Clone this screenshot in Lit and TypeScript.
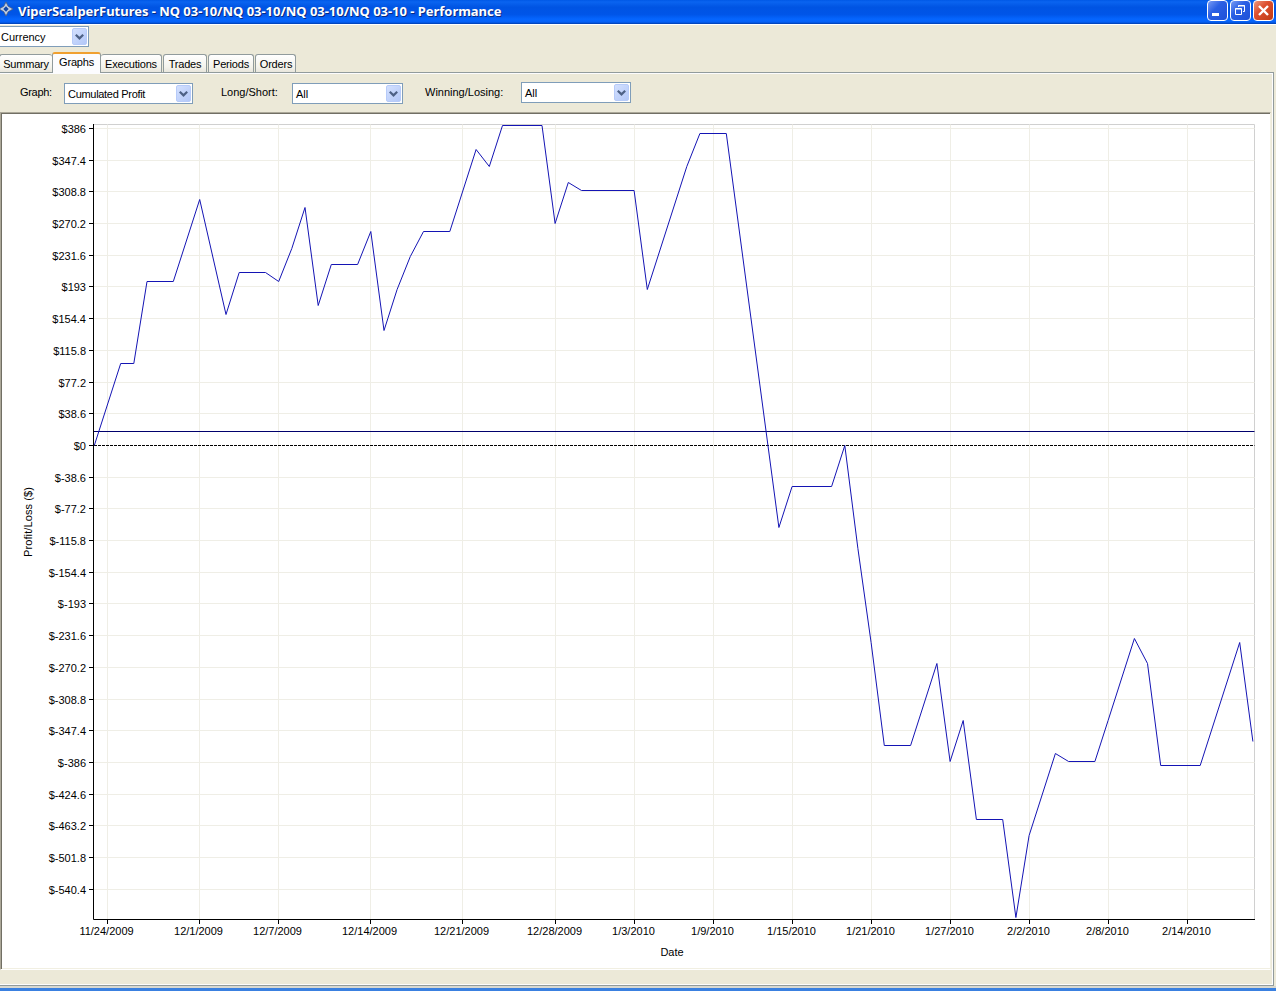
import { LitElement, html, svg, css } from "lit";
import { customElement, property } from "lit/decorators.js";

// [days since the first trade, cumulated profit in dollars]
const PROFIT: [number, number][] = [
  [0, 0], [2, 100], [3, 100], [4, 200], [6, 200], [8, 300], [10, 160], [11, 210],
  [13, 210], [14, 200], [15, 240], [16, 290], [17, 170], [18, 220], [20, 220],
  [21, 260], [22, 140], [23, 190], [24, 230], [25, 260], [27, 260], [29, 360],
  [30, 340], [31, 390], [34, 390], [35, 270], [36, 320], [37, 310], [41, 310],
  [42, 190], [45, 340], [46, 380], [48, 380], [52, -100], [53, -50], [56, -50],
  [57, 0], [58, -125], [59, -240], [60, -365], [62, -365], [64, -265], [65, -385],
  [66, -335], [67, -455], [69, -455], [70, -575], [71, -475], [73, -375],
  [74, -385], [76, -385], [77, -335], [79, -235], [80, -265], [81, -390],
  [84, -390], [87, -240], [88, -360],
];

const DATES: [number, string][] = [
  [1, "11/24/2009"], [8, "12/1/2009"], [14, "12/7/2009"], [21, "12/14/2009"],
  [28, "12/21/2009"], [35, "12/28/2009"], [41, "1/3/2010"], [47, "1/9/2010"],
  [53, "1/15/2010"], [59, "1/21/2010"], [65, "1/27/2010"], [71, "2/2/2010"],
  [77, "2/8/2010"], [83, "2/14/2010"],
];

const STEP = 38.6;
const AVERAGE = 17;

const LEFT = 91.5;
const RIGHT = 1252.5;
const TOP = 10.5;
const BOTTOM = 805.5;

const px = (day: number) => 92.35 + day * 13.165;
const py = (value: number) => 331.45 - value * 0.8215;
const snap = (n: number) => Math.floor(n) + 0.5;

@customElement("profit-chart")
export class ProfitChart extends LitElement {
  private renderValue(n: number) {
    const value = n * STEP;
    const y = snap(py(value));
    const label = `$${Number(value.toFixed(1))}`;
    return svg`
      <line class="grid" x1=${LEFT} x2=${RIGHT} y1=${y} y2=${y}></line>
      <line class="axis" x1=${LEFT - 4.5} x2=${LEFT} y1=${y} y2=${y}></line>
      <text x="84" y=${y + 4.5} text-anchor="end">${label}</text>
    `;
  }

  private renderDate([day, label]: [number, string]) {
    const x = snap(px(day));
    return svg`
      <line class="grid" x1=${x} x2=${x} y1=${TOP} y2=${BOTTOM}></line>
      <line class="axis" x1=${x} x2=${x} y1=${BOTTOM} y2=${BOTTOM + 4.5}></line>
      <text x=${x - 1} y="821" text-anchor="middle">${label}</text>
    `;
  }

  override render() {
    const ticks = Array.from({ length: 25 }, (_, i) => 10 - i);
    const points = PROFIT.map(([d, v]) => `${px(d).toFixed(1)},${snap(py(v))}`).join(" ");
    const avg = snap(py(AVERAGE));
    const zero = snap(py(0));
    return html`
      <svg width="1267" height="853" viewBox="0 0 1267 853">
        <path class="frame" d="M${LEFT} ${TOP}H${RIGHT}V${BOTTOM}"></path>
        ${DATES.map((d) => this.renderDate(d))} ${ticks.map((n) => this.renderValue(n))}
        <line class="gap" x1=${LEFT} x2=${RIGHT} y1=${zero} y2=${zero}></line>
        <line class="zero" x1=${LEFT + 0.5} x2=${RIGHT} y1=${zero} y2=${zero}></line>
        <line class="avg" x1=${LEFT} x2=${RIGHT} y1=${avg} y2=${avg}></line>
        <polyline class="profit" points=${points}></polyline>
        <path class="axis" d="M${LEFT} ${TOP - 0.5}V${BOTTOM}H${RIGHT + 0.5}"></path>
        <text x="670" y="842" text-anchor="middle">Date</text>
        <text transform="translate(30 408) rotate(-90)" text-anchor="middle" textLength="70">
          Profit/Loss ($)
        </text>
      </svg>
    `;
  }

  static override styles = css`
    :host {
      display: block;
    }
    svg {
      display: block;
    }
    text {
      font: 11px "Liberation Sans", Arial, sans-serif;
      fill: #000;
    }
    line,
    path,
    polyline {
      fill: none;
      stroke-width: 1;
    }
    .grid {
      stroke: #efeee6;
    }
    .frame {
      stroke: #d0d0d0;
    }
    .axis {
      stroke: #000;
    }
    .gap {
      stroke: #fff;
    }
    .zero {
      stroke: #000;
      stroke-dasharray: 3 1;
    }
    .avg {
      stroke: #00006c;
    }
    .profit {
      stroke: #1414b4;
    }
  `;
}

@customElement("xp-select")
export class XpSelect extends LitElement {
  @property() value = "";

  override render() {
    return html`
      <span class="value">${this.value}</span>
      <span class="button">
        <svg width="9" height="6" viewBox="0 0 9 6">
          <path d="M0.8 0.8L4.5 4.4L8.2 0.8"></path>
        </svg>
      </span>
    `;
  }

  static override styles = css`
    :host {
      display: flex;
      box-sizing: border-box;
      height: 21px;
      padding: 1px;
      border: 1px solid #7f9db9;
      background: #fff;
    }
    .value {
      flex: 1;
      padding-left: 2px;
      line-height: 18px;
      white-space: nowrap;
    }
    .button {
      display: flex;
      align-items: center;
      justify-content: center;
      box-sizing: border-box;
      width: 15px;
      height: 17px;
      border: 1px solid #b7cbf9;
      border-radius: 2px;
      background: linear-gradient(135deg, #d3e0fe, #b3c8f8);
    }
    path {
      fill: none;
      stroke: #4d6185;
      stroke-width: 2.2;
    }
  `;
}

@customElement("app-root")
export class AppRoot extends LitElement {
  private renderTitleBar() {
    return html`
      <header>
        <svg class="logo" width="14" height="18" viewBox="0 0 14 18">
          <path
            class="star"
            d="M6 2L8.2 6.3L13 9L8.2 11.7L6 16L3.8 11.7L-1 9L3.8 6.3Z"
          ></path>
          <path class="hole" d="M6 6.3L8.7 9L6 11.7L3.3 9Z"></path>
        </svg>
        <h1>ViperScalperFutures - NQ 03-10/NQ 03-10/NQ 03-10/NQ 03-10 - Performance</h1>
        <div class="buttons">
          <svg class="btn" viewBox="0 0 19 19">
            <rect class="glyph" x="4" y="12" width="7" height="3"></rect>
          </svg>
          <svg class="btn" viewBox="0 0 19 19">
            <path class="line" d="M7.5 6V4.5H13.5V10.5H12M7 5H14"></path>
            <path class="line" d="M4.5 7.5H10.5V13.5H4.5ZM4 8H11"></path>
          </svg>
          <svg class="btn close" viewBox="0 0 19 19">
            <path class="cross" d="M5 5L14 14M14 5L5 14"></path>
          </svg>
        </div>
      </header>
    `;
  }

  override render() {
    return html`
      ${this.renderTitleBar()}
      <div class="currency"><xp-select class="w-currency" value="Currency"></xp-select></div>
      <nav>
        <span class="tab summary">Summary</span>
        <span class="tab graphs active">Graphs</span>
        <span class="tab executions">Executions</span>
        <span class="tab trades">Trades</span>
        <span class="tab periods">Periods</span>
        <span class="tab orders">Orders</span>
      </nav>
      <main>
        <div class="filters">
          <label class="l-graph">Graph:</label>
          <xp-select class="w-graph" value="Cumulated Profit"></xp-select>
          <label class="l-side">Long/Short:</label>
          <xp-select class="w-side" value="All"></xp-select>
          <label class="l-result">Winning/Losing:</label>
          <xp-select class="w-result" value="All"></xp-select>
        </div>
        <div class="panel"><profit-chart></profit-chart></div>
      </main>
      <footer></footer>
    `;
  }

  static override styles = css`
    :host {
      display: flex;
      flex-direction: column;
      box-sizing: border-box;
      width: 1276px;
      height: 991px;
      overflow: hidden;
      background: #ece9d8;
      color: #000;
      font: 11px "Liberation Sans", Arial, sans-serif;
    }
    header {
      display: flex;
      flex: none;
      box-sizing: border-box;
      height: 25px;
      border-bottom: 1px solid #fff;
      background: linear-gradient(
        #0058e6 0,
        #0a64f0 8%,
        #0054e3 30%,
        #0055e8 60%,
        #0566ff 80%,
        #0560f5 92%,
        #003dac 100%
      );
    }
    .star {
      fill: #c4d0e4;
      stroke: #4a5c80;
      stroke-width: 0.8;
    }
    .hole {
      fill: #1248a8;
    }
    h1 {
      flex: 1;
      margin: 0 0 0 4px;
      color: #fff;
      font: bold 13px/22px "Noto Sans", "Open Sans", sans-serif;
      letter-spacing: -0.03px;
      text-shadow: 1px 1px 0 #0a2a80;
      white-space: nowrap;
    }
    .buttons {
      display: flex;
      gap: 2px;
      padding-right: 2px;
    }
    .btn {
      box-sizing: border-box;
      width: 21px;
      height: 21px;
      border: 1px solid #fff;
      border-radius: 4px;
      background: linear-gradient(135deg, #7a9cf4, #2b60e4 40%, #1d50d8);
    }
    .close {
      background: linear-gradient(135deg, #ee9a80, #dd5030 40%, #c03a14);
    }
    .glyph {
      fill: #fff;
    }
    .line {
      fill: none;
      stroke: #fff;
    }
    .cross {
      stroke: #fff;
      stroke-width: 2.4;
    }
    .currency {
      flex: none;
      box-sizing: border-box;
      height: 27px;
      padding-top: 1px;
    }
    .w-currency {
      width: 92px;
      margin-left: -3px;
    }
    nav {
      display: flex;
      flex: none;
      align-items: flex-end;
      height: 20px;
      letter-spacing: -0.2px;
    }
    .tab {
      box-sizing: border-box;
      height: 18px;
      margin-right: 1px;
      border: 1px solid #919b9c;
      border-bottom: 0;
      border-radius: 3px 3px 0 0;
      background: linear-gradient(#fff, #f4f3ec 70%, #e8e6dc);
      line-height: 18px;
      text-align: center;
      white-space: nowrap;
    }
    .active {
      position: relative;
      height: 21px;
      margin-bottom: -1px;
      border-top: 2px solid #f0a030;
      background: #fcfcfe;
      line-height: 17px;
    }
    .summary {
      width: 53px;
      margin: 0 0 0 -1px;
      border-right: 0;
    }
    .graphs {
      width: 49px;
      margin-right: 0;
    }
    .executions {
      width: 61px;
      border-left: 0;
    }
    .trades {
      width: 44px;
    }
    .periods {
      width: 46px;
    }
    .orders {
      width: 41px;
      padding-left: 1px;
    }
    main {
      display: flex;
      flex: 1;
      flex-direction: column;
      box-sizing: border-box;
      width: 1274px;
      border: solid #919b9c;
      border-width: 1px 1px 1px 0;
      box-shadow: inset -1px 1px #fcfcfe, inset 0 -1px #fcfcfe;
    }
    .filters {
      display: flex;
      flex: none;
      height: 39px;
    }
    .filters label {
      padding-top: 13px;
      white-space: nowrap;
    }
    .filters xp-select {
      margin-top: 10px;
    }
    .filters .w-result {
      margin-top: 9px;
    }
    .l-graph {
      width: 44px;
      padding-left: 20px;
      letter-spacing: -0.3px;
    }
    .w-graph {
      width: 129px;
      letter-spacing: -0.3px;
    }
    .l-side {
      width: 71px;
      padding-left: 28px;
    }
    .w-side {
      width: 111px;
    }
    .l-result {
      width: 96px;
      padding-left: 22px;
    }
    .w-result {
      width: 110px;
    }
    .panel {
      flex: none;
      box-sizing: border-box;
      width: 1271px;
      height: 858px;
      padding: 1px;
      border: 1px solid #aca899;
      border-right-color: #f1efe2;
      border-bottom-color: #fff;
      background: #fff;
      box-shadow: inset 1px 1px #716f64, inset 0 -1px #f1efe2;
    }
    footer {
      flex: none;
      box-sizing: border-box;
      height: 5px;
      border-top: 2px solid #d8d8d0;
      background: #3a80e0;
    }
  `;
}
